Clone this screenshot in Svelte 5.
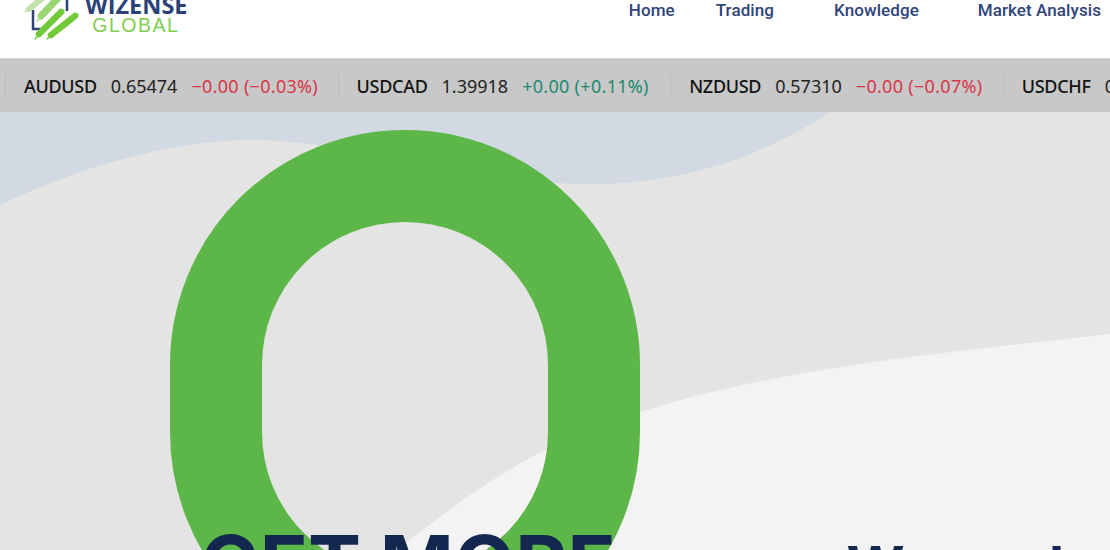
<script lang="ts">
	type Quote = { symbol: string; price: string; change: string; up: boolean };

	const links = ['Home', 'Trading', 'Knowledge', 'Market Analysis'];

	const quotes: Quote[] = [
		{ symbol: 'AUDUSD', price: '0.65474', change: '−0.00 (−0.03%)', up: false },
		{ symbol: 'USDCAD', price: '1.39918', change: '+0.00 (+0.11%)', up: true },
		{ symbol: 'NZDUSD', price: '0.57310', change: '−0.00 (−0.07%)', up: false },
		{ symbol: 'USDCHF', price: '0.90215', change: '+0.00 (+0.02%)', up: true }
	];
</script>

<div class="page">
	<header class="header">
		<a class="logo" href="#top">
			<svg class="mark" viewBox="0 0 56 42" width="56" height="42" aria-hidden="true">
				<path d="M9 10v19h8M43 0v11" fill="none" stroke="#2b4279" stroke-width="2.5" />
				<g fill="none" stroke-linecap="round">
					<path d="M1 12 20 -3" stroke="#c3e3ad" stroke-width="1.5" />
					<path d="M5 9 20 -3" stroke="#c3e3ad" stroke-width="6" />
					<path d="M13 21 35 -3" stroke="#9bd674" stroke-width="1.5" />
					<path d="M17 16 34 -2" stroke="#9bd674" stroke-width="7" />
					<path d="M11 39 40 10" stroke="#72c93a" stroke-width="1.5" />
					<path d="M15 34 37 12" stroke="#72c93a" stroke-width="6.5" />
					<path d="M23 39 54 14" stroke="#72c93a" stroke-width="1.5" />
					<path d="M27 35 51 16" stroke="#72c93a" stroke-width="6.5" />
				</g>
			</svg>
			<span class="wordmark">
				<strong>WIZENSE</strong>
				<span>GLOBAL</span>
			</span>
		</a>
		<nav class="nav">
			{#each links as link}
				<a href="#top">{link}</a>
			{/each}
		</nav>
	</header>

	<div class="ticker">
		{#each quotes as q}
			<div class="quote">
				<b>{q.symbol}</b>
				<span>{q.price}</span>
				<span class={q.up ? 'up' : 'down'}>{q.change}</span>
			</div>
		{/each}
	</div>

	<section class="hero">
		<svg class="waves" viewBox="0 0 1110 438" preserveAspectRatio="none" aria-hidden="true">
			<rect width="1110" height="438" fill="#e4e4e4" />
			<path
				d="M0 93C90 50 180 28 255 28C350 28 470 72 590 72C690 72 770 40 830 0H0z"
				fill="#d2d9e3"
			/>
			<path
				d="M397 438C470 380 540 330 640 300C780 255 950 240 1110 222V438z"
				fill="#f3f3f3"
			/>
		</svg>
		<div class="zero"></div>
		<div class="columns">
			<h1>GET MORE</h1>
			<h2>We are here</h2>
		</div>
	</section>
</div>

<style>
	:global(body) {
		margin: 0;
		overflow: hidden;
		background: #fff;
	}

	.page {
		height: 550px;
		overflow: hidden;
	}

	.header {
		display: flex;
		justify-content: space-between;
		height: 58px;
		padding: 0 9px 0 24px;
		box-sizing: border-box;
		background: #fff;
		overflow: hidden;
	}

	.logo {
		display: flex;
		gap: 5px;
		height: 42px;
		text-decoration: none;
	}

	.mark {
		display: block;
	}

	.wordmark {
		display: flex;
		flex-direction: column;
		align-items: center;
		font-family: 'Liberation Sans', sans-serif;
		margin-top: -5.5px;
	}

	.wordmark strong {
		font-family: 'Open Sans', sans-serif;
		font-size: 23.5px;
		line-height: 20px;
		font-weight: 700;
		color: #2b4279;
	}

	.wordmark span {
		font-size: 19.5px;
		line-height: 21px;
		letter-spacing: 1.5px;
		margin-right: 1px;
		color: #7fce4f;
	}

	.nav {
		display: flex;
		gap: 41px;
		height: 21px;
		font-family: Roboto, sans-serif;
		font-size: 17px;
		font-weight: 500;
		line-height: 21px;
		letter-spacing: 0.08px;
	}

	.nav a {
		color: #2f4478;
		text-decoration: none;
	}

	.nav a:nth-child(2) {
		margin-right: 19px;
	}

	.nav a:nth-child(3) {
		margin-right: 18px;
	}

	.ticker {
		display: flex;
		height: 54px;
		box-sizing: border-box;
		padding: 14px 0 13px 5px;
		background: #c8c8c8;
		border-top: 1px solid #d4d4d4;
		font-family: 'Noto Sans', sans-serif;
		font-size: 18px;
		color: #222;
	}

	.quote {
		display: flex;
		flex: none;
		align-items: center;
		gap: 14px;
		width: 332.6px;
		box-sizing: border-box;
		padding-left: 18px;
		border-left: 1px solid #bdbdbd;
		white-space: nowrap;
	}

	.quote b {
		font-weight: 500;
		letter-spacing: -0.3px;
		color: #131313;
	}

	.up,
	.down {
		letter-spacing: 0.3px;
	}

	.up {
		color: #1c8a70;
	}

	.down {
		color: #d8354a;
	}

	.hero {
		position: relative;
		height: 438px;
		overflow: hidden;
	}

	.waves {
		position: absolute;
		inset: 0;
		width: 100%;
		height: 100%;
	}

	.zero {
		position: absolute;
		left: 170px;
		top: 18px;
		width: 470px;
		height: 537px;
		box-sizing: border-box;
		border: 92px solid #5db648;
		border-radius: 235px;
	}

	.columns {
		position: relative;
		display: grid;
		grid-template-columns: 646.5px 1fr;
		padding: 405px 0 0 200px;
		font-family: Inter, sans-serif;
		color: #14274e;
		white-space: nowrap;
	}

	h1,
	h2 {
		margin: 0;
		font-weight: 700;
		line-height: 1.2;
	}

	h1 {
		font-size: 79.5px;
	}

	h2 {
		font-size: 56px;
		padding-top: 17px;
	}
</style>
